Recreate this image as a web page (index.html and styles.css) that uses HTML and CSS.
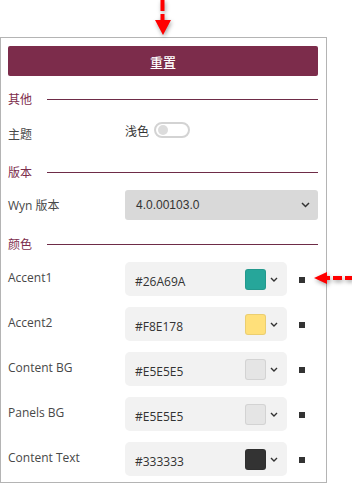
FILE: index.html
```html
<!DOCTYPE html>
<html lang="zh-CN">
<head>
    <meta charset="UTF-8">
    <meta name="viewport" content="width=device-width, initial-scale=1.0">
    <title>主题设置</title>
    <link rel="stylesheet" href="styles.css">
</head>
<body>

    <!-- Annotation arrows -->
    <svg class="arrow arrow-down" width="18" height="38" viewBox="0 0 18 38">
        <rect x="6.5" y="0" width="4" height="11" fill="#f00"/>
        <rect x="6.5" y="14" width="4" height="7" fill="#f00"/>
        <polygon points="1,20 17,20 9,35" fill="#f00"/>
    </svg>
    <svg class="arrow arrow-left" width="40" height="16" viewBox="0 0 40 16">
        <polygon points="1,7 14,1 14,13" fill="#f00"/>
        <rect x="13" y="5" width="4" height="4" fill="#f00"/>
        <rect x="20" y="5" width="9" height="4" fill="#f00"/>
        <rect x="32" y="5" width="8" height="4" fill="#f00"/>
    </svg>

    <div class="panel">
        <button class="reset-btn">重置</button>

        <div class="section">
            <span>其他</span>
            <div class="section-line"></div>
        </div>
        <div class="row theme-row">
            <div class="label">主题</div>
            <div class="theme-value">
                <span>浅色</span>
                <div class="toggle"><div class="knob"></div></div>
            </div>
        </div>

        <div class="section">
            <span>版本</span>
            <div class="section-line"></div>
        </div>
        <div class="row version-row">
            <div class="label">Wyn 版本</div>
            <div class="select">
                <span>4.0.00103.0</span>
                <svg class="chevron" width="9" height="6" viewBox="0 0 9 6"><polyline points="1,1 4.5,4.5 8,1" fill="none" stroke="#333" stroke-width="1.5"/></svg>
            </div>
        </div>

        <div class="section colors-section">
            <span>颜色</span>
            <div class="section-line"></div>
        </div>

        <div class="color-list">
            <div class="row color-row">
                <div class="label">Accent1</div>
                <div class="color-input">
                    <span class="hex">#26A69A</span>
                    <div class="swatch" style="background: #26A69A;"></div>
                    <svg class="chevron" width="8" height="5" viewBox="0 0 8 5"><polyline points="1,1 4,4 7,1" fill="none" stroke="#333" stroke-width="1.4"/></svg>
                </div>
                <div class="marker"></div>
            </div>
            <div class="row color-row">
                <div class="label">Accent2</div>
                <div class="color-input">
                    <span class="hex">#F8E178</span>
                    <div class="swatch" style="background: #FFE07A;"></div>
                    <svg class="chevron" width="8" height="5" viewBox="0 0 8 5"><polyline points="1,1 4,4 7,1" fill="none" stroke="#333" stroke-width="1.4"/></svg>
                </div>
                <div class="marker"></div>
            </div>
            <div class="row color-row">
                <div class="label">Content BG</div>
                <div class="color-input">
                    <span class="hex">#E5E5E5</span>
                    <div class="swatch" style="background: #E5E5E5;"></div>
                    <svg class="chevron" width="8" height="5" viewBox="0 0 8 5"><polyline points="1,1 4,4 7,1" fill="none" stroke="#333" stroke-width="1.4"/></svg>
                </div>
                <div class="marker"></div>
            </div>
            <div class="row color-row">
                <div class="label">Panels BG</div>
                <div class="color-input">
                    <span class="hex">#E5E5E5</span>
                    <div class="swatch" style="background: #E5E5E5;"></div>
                    <svg class="chevron" width="8" height="5" viewBox="0 0 8 5"><polyline points="1,1 4,4 7,1" fill="none" stroke="#333" stroke-width="1.4"/></svg>
                </div>
                <div class="marker"></div>
            </div>
            <div class="row color-row">
                <div class="label">Content Text</div>
                <div class="color-input">
                    <span class="hex">#333333</span>
                    <div class="swatch" style="background: #333333;"></div>
                    <svg class="chevron" width="8" height="5" viewBox="0 0 8 5"><polyline points="1,1 4,4 7,1" fill="none" stroke="#333" stroke-width="1.4"/></svg>
                </div>
                <div class="marker"></div>
            </div>
        </div>
    </div>

</body>
</html>
```

FILE: styles.css
```css
/* General body styles */
body {
    margin: 0;
    padding: 37px 0 0 0;
    background: #fff;
    color: #333;
    font-family: 'Open Sans', 'Noto Sans CJK SC', sans-serif;
    font-size: 12px;
    position: relative;
    width: 352px;
    height: 484px;
    box-sizing: border-box;
    overflow: hidden;
}

/* Red annotation arrows */
.arrow {
    position: absolute;
    filter: drop-shadow(1px 2px 2px rgba(0, 0, 0, 0.35));
    z-index: 2;
}

.arrow-down {
    left: 154px;
    top: 0;
}

.arrow-left {
    left: 313px;
    top: 271px;
}

/* Settings panel */
.panel {
    width: 327px;
    height: 446px;
    border: 1px solid #b4b4b4;
    box-sizing: border-box;
    padding: 8px 8px 0 7px;
}

.reset-btn {
    display: block;
    width: 100%;
    height: 30px;
    border: none;
    border-radius: 2px;
    background-color: #7c2c4b;
    color: #fff;
    font-family: 'Noto Sans CJK SC', sans-serif;
    font-size: 13px;
    font-weight: 500;
    padding: 0;
}

/* Section headers */
.section {
    display: flex;
    align-items: center;
    height: 20px;
    margin-top: 13px;
    color: #7c2c4b;
    font-family: 'Noto Sans CJK SC', sans-serif;
}

.section span {
    width: 39px;
    line-height: 16px;
}

.section-line {
    flex: 1;
    height: 1px;
    background: #6e2c47;
}

.row {
    display: flex;
}

.label {
    width: 117px;
    line-height: 16px;
    color: #484848;
    font-family: 'Open Sans', 'Noto Sans CJK SC', sans-serif;
}

/* Theme row */
.theme-row {
    height: 40px;
}

.theme-row .label {
    margin-top: 18px;
}

.theme-value {
    display: flex;
    align-items: center;
    margin-top: 13px;
    height: 16px;
    gap: 5px;
    font-family: 'Noto Sans CJK SC', sans-serif;
}

.toggle {
    width: 36px;
    height: 16px;
    border: 2px solid #d3d3d3;
    border-radius: 9px;
    box-sizing: border-box;
    display: flex;
    align-items: center;
    padding-left: 2px;
}

.knob {
    width: 10px;
    height: 10px;
    border-radius: 50%;
    background: #dcdcdc;
}

/* Version select */
.version-row {
    margin-top: 8px;
    align-items: center;
}

.version-row .label {
    padding-top: 2px;
}

.select {
    flex: 1;
    height: 30px;
    background: #d9d9d9;
    border-radius: 3px;
    display: flex;
    align-items: center;
    justify-content: space-between;
    padding: 0 8px 0 11px;
    font-family: 'Liberation Sans', sans-serif;
    font-size: 12px;
    color: #333;
}

.colors-section {
    margin-top: 14px;
}

/* Color rows */
.color-list {
    display: flex;
    flex-direction: column;
    gap: 11px;
    margin-top: 8px;
}

.color-row .label {
    margin-top: 8px;
}

.color-input {
    width: 162px;
    height: 34px;
    box-sizing: border-box;
    background: #f2f2f2;
    border-radius: 5px;
    display: flex;
    align-items: center;
    padding: 0 9px 0 10px;
}

.hex {
    flex: 1;
    padding-top: 5px;
    color: #333;
}

.swatch {
    width: 21px;
    height: 21px;
    border-radius: 3px;
    border: 1px solid rgba(0, 0, 0, 0.08);
    box-sizing: border-box;
    margin-right: 4px;
}

.marker {
    width: 6px;
    height: 6px;
    background: #333;
    margin: 15px 0 0 12px;
}
```
